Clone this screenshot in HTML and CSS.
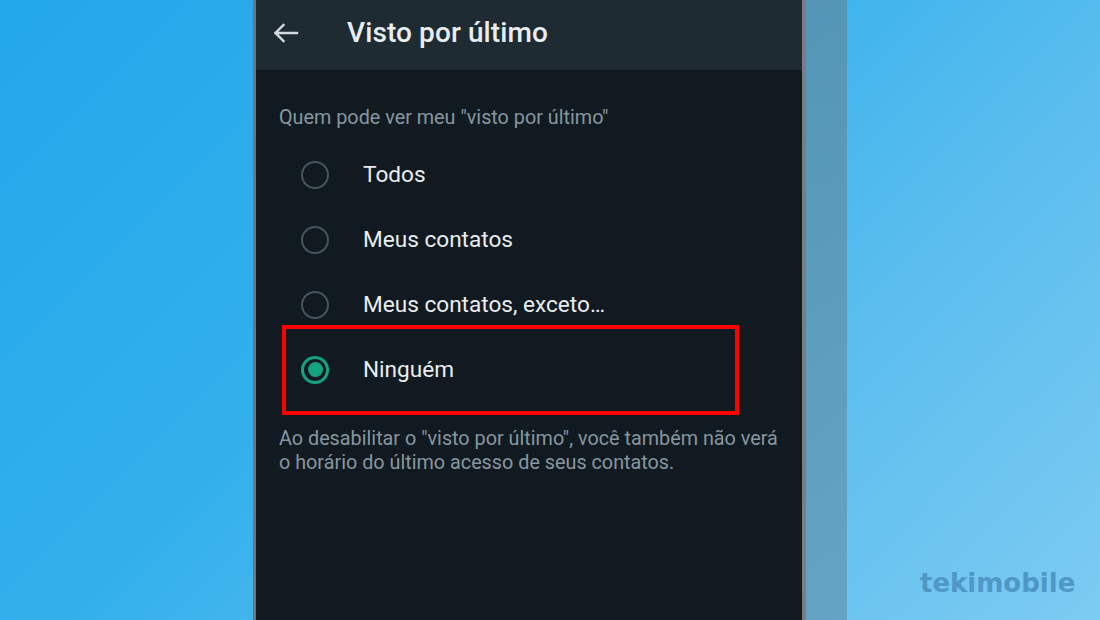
FILE: index.html
```html
<!DOCTYPE html>
<html lang="pt-BR">
<head>
    <meta charset="UTF-8">
    <meta name="viewport" content="width=device-width, initial-scale=1.0">
    <title>Visto por último</title>
    <link rel="stylesheet" href="styles.css">
</head>
<body>
    <div class="stage">
        <div class="phone">
            <div class="app-bar">
                <svg class="back" width="26" height="20" viewBox="0 0 26 20">
                    <path d="M24 10H2.5M10.5 2L2.5 10l8 8" fill="none" stroke="#d4dade" stroke-width="2.4" stroke-linecap="square"/>
                </svg>
                <h1>Visto por último</h1>
            </div>

            <div class="content">
                <p class="section-title">Quem pode ver meu "visto por último"</p>

                <div class="options">
                    <div class="option">
                        <span class="radio"></span>
                        <span class="label">Todos</span>
                    </div>
                    <div class="option">
                        <span class="radio"></span>
                        <span class="label">Meus contatos</span>
                    </div>
                    <div class="option">
                        <span class="radio"></span>
                        <span class="label">Meus contatos, exceto…</span>
                    </div>
                    <div class="option selected highlight">
                        <span class="radio"></span>
                        <span class="label">Ninguém</span>
                    </div>
                </div>

                <p class="note">Ao desabilitar o "visto por último", você também não verá o horário do último acesso de seus contatos.</p>
            </div>
        </div>
        <div class="phone-edge"></div>
    </div>

    <div class="watermark">tekimobile</div>
</body>
</html>
```

FILE: styles.css
```css
html, body {
    margin: 0;
    height: 100%;
}
body {
    font-family: 'Roboto', 'Noto Sans', sans-serif;
    background: linear-gradient(135deg, #22a7ea 0%, #33b0ec 40%, #5cbeee 70%, #7ccbf2 100%);
    overflow: hidden;
    position: relative;
}
.stage {
    display: flex;
    height: 100%;
    padding-left: 253px;
}
.phone {
    width: 546px;
    height: 100%;
    background-color: #121a21;
    border-left: 3px solid #6f767b;
    border-right: 4px solid #787e82;
    display: flex;
    flex-direction: column;
}
.phone-edge {
    width: 41px;
    height: 100%;
    background: linear-gradient(180deg, rgba(92, 140, 165, 0.75), rgba(96, 150, 178, 0.7));
}
.app-bar {
    height: 70px;
    background-color: #1f2b33;
    display: flex;
    align-items: center;
    padding: 0 0 5px 17px;
    box-sizing: border-box;
}
.back {
    display: block;
}
.app-bar h1 {
    margin: 0 0 0 48px;
    font-size: 28px;
    font-weight: 500;
    color: #e9edef;
    letter-spacing: 0.1px;
}
.content {
    padding: 36px 0 0 0;
}
.section-title {
    margin: 0 0 12px 23px;
    font-size: 19.8px;
    line-height: 24px;
    color: #8696a0;
}
.options {
    display: flex;
    flex-direction: column;
}
.option {
    height: 65px;
    display: flex;
    align-items: center;
    padding-left: 45px;
    position: relative;
}
.radio {
    width: 28px;
    height: 28px;
    box-sizing: border-box;
    border: 2.5px solid #46545c;
    border-radius: 50%;
    display: flex;
    align-items: center;
    justify-content: center;
}
.selected .radio {
    border: 3px solid #14a37f;
}
.selected .radio::after {
    content: '';
    width: 15px;
    height: 15px;
    border-radius: 50%;
    background-color: #14a37f;
}
.label {
    margin-left: 34px;
    font-size: 22.6px;
    color: #e9edef;
}
.highlight::before {
    content: '';
    position: absolute;
    left: 26px;
    top: -12px;
    width: 457px;
    height: 90px;
    box-sizing: border-box;
    border: 4px solid #ff0000;
}
.note {
    margin: 25px 20px 0 23px;
    font-size: 19.8px;
    line-height: 24px;
    color: #8696a0;
}
.watermark {
    position: absolute;
    left: 920px;
    top: 568px;
    font-family: 'DejaVu Sans', sans-serif;
    font-weight: bold;
    font-size: 26px;
    color: #4b8fbf;
    opacity: 0.85;
}
```
